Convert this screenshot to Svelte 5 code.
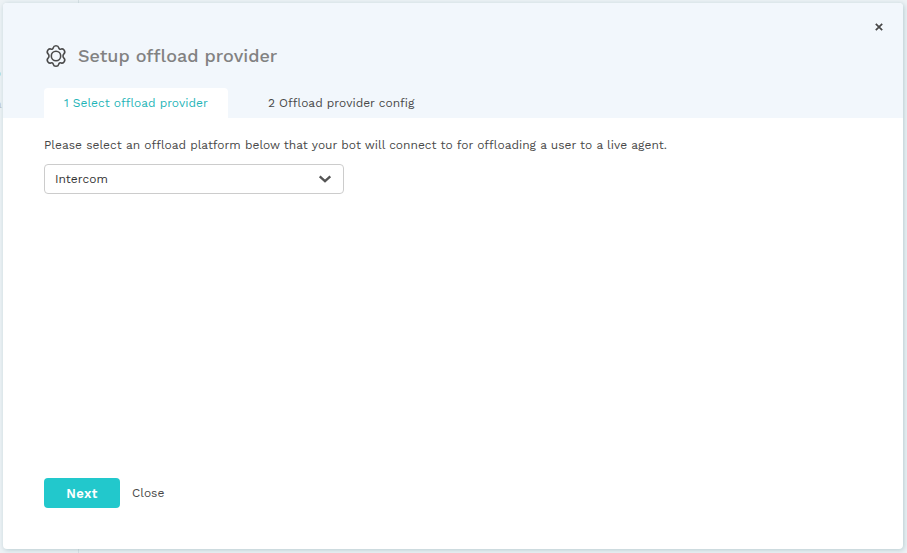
<script>
  const tabs = ['Select offload provider', 'Offload provider config'];
  let active = $state(0);
</script>

<div class="page">
  <span class="trace ring"></span>
  <span class="trace letter">a</span>
  <span class="divider"></span>
  <section class="modal" role="dialog" aria-labelledby="title">
    <header>
      <button class="dismiss" aria-label="Dismiss">
        <svg width="8" height="8" viewBox="0 0 8 8"><path d="M.8.8 7.2 7.2M7.2.8.8 7.2" fill="none" stroke="#484848" stroke-width="1.7" /></svg>
      </button>
      <div class="heading">
        <svg width="24" height="24" viewBox="0 0 24 24" fill="none" stroke="#4a4a4a" stroke-width="1.6" stroke-linejoin="round">
          <path d="M9.3 3.6C9.6 2.2 10.4 1.7 12 1.7S14.4 2.2 14.7 3.6C15 5 15.9 5.5 17.2 5.1C18.6 4.6 19.5 5 20.3 6.4S20.9 8.9 19.9 9.8C18.7 10.9 18.7 13.1 19.9 14.2C20.9 15.1 21.1 16.2 20.3 17.6S18.6 19.4 17.2 18.9C15.9 18.5 15 19 14.7 20.4C14.4 21.8 13.6 22.3 12 22.3S9.6 21.8 9.3 20.4C9 19 8.1 18.5 6.8 18.9C5.4 19.4 4.5 19 3.7 17.6S3.1 15.1 4.1 14.2C5.3 13.1 5.3 10.9 4.1 9.8C3.1 8.9 2.9 7.8 3.7 6.4S5.4 4.6 6.8 5.1C8.1 5.5 9 5 9.3 3.6Z" />
          <circle cx="12" cy="12" r="4.7" />
        </svg>
        <h1 id="title">Setup offload provider</h1>
      </div>
      <nav>
        {#each tabs as label, i}
          <button class="tab" class:active={active === i} onclick={() => (active = i)}>{i + 1} {label}</button>
        {/each}
      </nav>
    </header>
    <main>
      <p>Please select an offload platform below that your bot will connect to for offloading a user to a live agent.</p>
      <button class="select">
        <span>Intercom</span>
        <svg width="14" height="10" viewBox="0 0 14 10"><path d="M1.7 2.3 7 7.2l5.3-4.9" fill="none" stroke="#555" stroke-width="2.3" /></svg>
      </button>
    </main>
    <footer>
      <button class="next">Next</button>
      <button class="close">Close</button>
    </footer>
  </section>
</div>

<style>
  :global(body) { margin: 0; overflow: hidden; }
  .page {
    position: relative;
    box-sizing: border-box;
    width: 907px;
    height: 553px;
    padding: 3px 4px 4px 3px;
    background: #edf2f5;
    overflow: hidden;
    font-family: "Work Sans", Inter, sans-serif;
    font-size: 12px;
    color: #484848;
  }
  .trace { position: absolute; }
  .ring { left: -5px; top: 71px; width: 4px; height: 4px; border: 1.5px solid #ace0e7; border-radius: 50%; }
  .letter { left: -5px; top: 97px; color: #bfc5c8; }
  .divider { position: absolute; left: 78px; top: 0; width: 1px; height: 553px; background: #d9e2e5; }
  .modal {
    position: relative;
    display: flex;
    flex-direction: column;
    box-sizing: border-box;
    height: 546px;
    border-radius: 4px;
    background: #fff;
    box-shadow: 1px 1px 5px rgba(40, 105, 115, .28);
    overflow: hidden;
  }
  button { padding: 0; border: 0; background: none; font: inherit; color: inherit; white-space: nowrap; }
  header {
    display: flex;
    flex-direction: column;
    justify-content: space-between;
    box-sizing: border-box;
    height: 115px;
    padding: 41px 41px 0;
    background: #f2f7fc;
  }
  .dismiss { position: absolute; right: 20px; top: 20px; width: 8px; height: 8px; }
  .dismiss svg, .select svg { display: block; }
  .heading { display: flex; align-items: center; height: 24px; gap: 10px; }
  h1 { margin: 0; font-size: 18px; line-height: 24px; font-weight: 500; color: #828282; white-space: nowrap; }
  nav { display: flex; height: 30px; gap: 20px; }
  .tab { width: 184px; padding-left: 20px; text-align: left; }
  .tab.active { background: #fff; color: #1fb5b8; border-radius: 4px 4px 0 0; }
  main { flex: 1; padding: 18px 41px 0; }
  p { margin: 0 0 10px; line-height: 18px; word-spacing: .08px; white-space: nowrap; }
  .select {
    display: flex;
    align-items: center;
    justify-content: space-between;
    box-sizing: border-box;
    width: 300px;
    height: 30px;
    padding: 0 11px 0 10px;
    border: 1px solid #ccc;
    border-radius: 4px;
    background: #fff;
    color: #333;
  }
  footer { display: flex; gap: 12px; height: 30px; padding: 0 41px 41px; }
  .next { width: 76px; border-radius: 4px; background: #22c8cc; color: #fff; font-size: 13px; font-weight: 600; letter-spacing: .45px; }
</style>
